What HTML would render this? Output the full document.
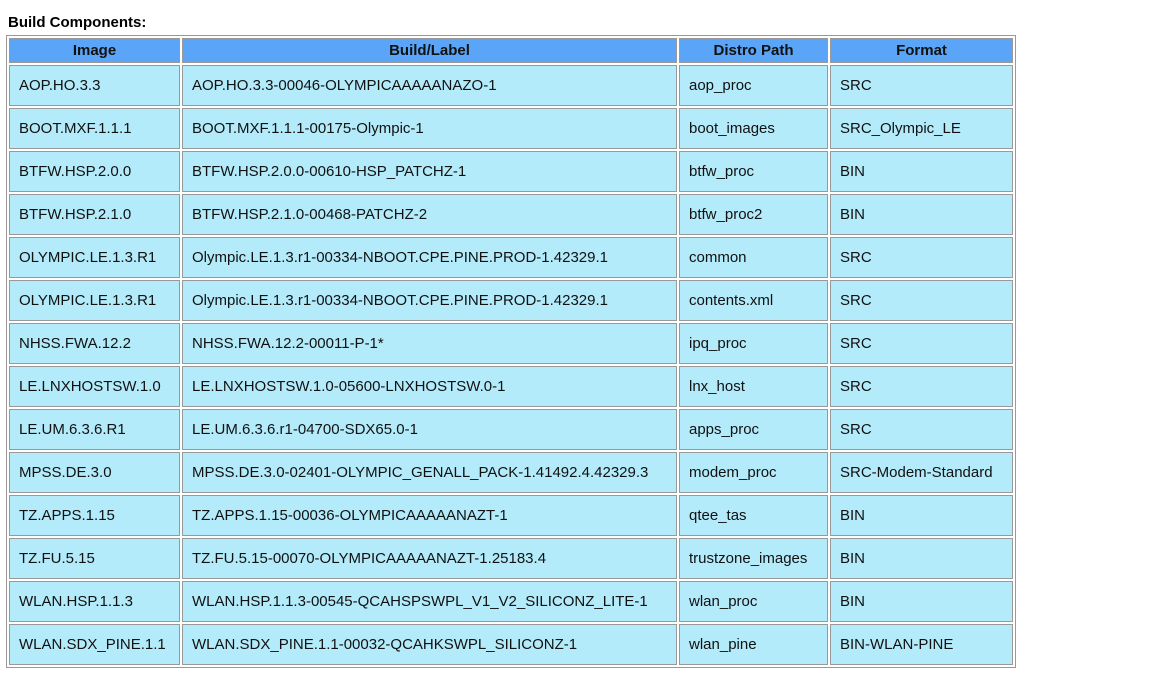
<!DOCTYPE html>
<html><head><meta charset="utf-8"><style>
body{margin:0;background:#fff;font-family:"Liberation Sans",sans-serif;}
.h{position:absolute;left:8px;top:14px;font-weight:bold;font-size:15px;color:#000;font-family:"Liberation Sans",sans-serif;}
table{position:absolute;left:6px;top:35px;border:1px solid #999;border-spacing:2px;border-collapse:separate;font-family:"Liberation Sans",sans-serif;font-size:15px;color:#111;}
td,th{border:1px solid #999;padding:0 0 0 9px;box-sizing:border-box;}
th{background:#5aa5f7;height:25px;font-weight:bold;text-align:center;padding:0;font-size:15px;}
td{background:#b3ebfb;height:41px;white-space:nowrap;}
</style></head><body>
<div class="h">Build Components:</div>
<table>
<tr><th style="width:171px">Image</th><th style="width:495px">Build/Label</th><th style="width:149px">Distro Path</th><th style="width:183px">Format</th></tr>
<tr><td>AOP.HO.3.3</td><td>AOP.HO.3.3-00046-OLYMPICAAAAANAZO-1</td><td>aop_proc</td><td>SRC</td></tr>
<tr><td>BOOT.MXF.1.1.1</td><td>BOOT.MXF.1.1.1-00175-Olympic-1</td><td>boot_images</td><td>SRC_Olympic_LE</td></tr>
<tr><td>BTFW.HSP.2.0.0</td><td>BTFW.HSP.2.0.0-00610-HSP_PATCHZ-1</td><td>btfw_proc</td><td>BIN</td></tr>
<tr><td>BTFW.HSP.2.1.0</td><td>BTFW.HSP.2.1.0-00468-PATCHZ-2</td><td>btfw_proc2</td><td>BIN</td></tr>
<tr><td>OLYMPIC.LE.1.3.R1</td><td>Olympic.LE.1.3.r1-00334-NBOOT.CPE.PINE.PROD-1.42329.1</td><td>common</td><td>SRC</td></tr>
<tr><td>OLYMPIC.LE.1.3.R1</td><td>Olympic.LE.1.3.r1-00334-NBOOT.CPE.PINE.PROD-1.42329.1</td><td>contents.xml</td><td>SRC</td></tr>
<tr><td>NHSS.FWA.12.2</td><td>NHSS.FWA.12.2-00011-P-1*</td><td>ipq_proc</td><td>SRC</td></tr>
<tr><td>LE.LNXHOSTSW.1.0</td><td>LE.LNXHOSTSW.1.0-05600-LNXHOSTSW.0-1</td><td>lnx_host</td><td>SRC</td></tr>
<tr><td>LE.UM.6.3.6.R1</td><td>LE.UM.6.3.6.r1-04700-SDX65.0-1</td><td>apps_proc</td><td>SRC</td></tr>
<tr><td>MPSS.DE.3.0</td><td>MPSS.DE.3.0-02401-OLYMPIC_GENALL_PACK-1.41492.4.42329.3</td><td>modem_proc</td><td>SRC-Modem-Standard</td></tr>
<tr><td>TZ.APPS.1.15</td><td>TZ.APPS.1.15-00036-OLYMPICAAAAANAZT-1</td><td>qtee_tas</td><td>BIN</td></tr>
<tr><td>TZ.FU.5.15</td><td>TZ.FU.5.15-00070-OLYMPICAAAAANAZT-1.25183.4</td><td>trustzone_images</td><td>BIN</td></tr>
<tr><td>WLAN.HSP.1.1.3</td><td>WLAN.HSP.1.1.3-00545-QCAHSPSWPL_V1_V2_SILICONZ_LITE-1</td><td>wlan_proc</td><td>BIN</td></tr>
<tr><td>WLAN.SDX_PINE.1.1</td><td>WLAN.SDX_PINE.1.1-00032-QCAHKSWPL_SILICONZ-1</td><td>wlan_pine</td><td>BIN-WLAN-PINE</td></tr>
</table>
</body></html>
